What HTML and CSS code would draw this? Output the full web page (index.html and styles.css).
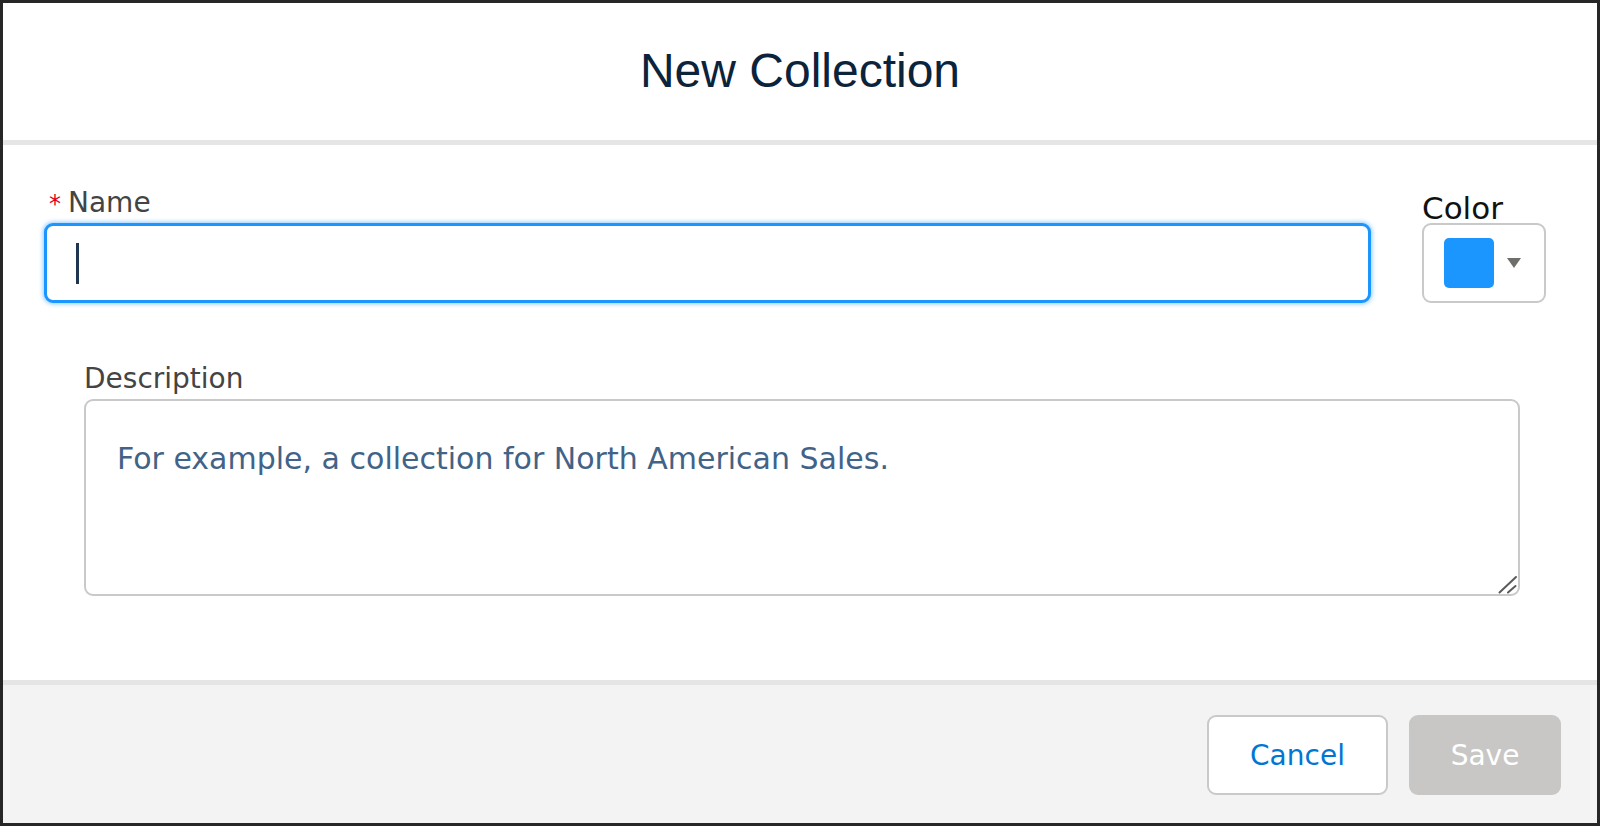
FILE: index.html
```html
<!DOCTYPE html>
<html lang="en">
<head>
<meta charset="utf-8">
<title>New Collection</title>
<link rel="stylesheet" href="styles.css">
</head>
<body>
<div class="modal">
  <header class="modal-header">
    <h1 class="title">New Collection</h1>
  </header>
  <main class="modal-body">
    <div class="row">
      <div class="field field-name">
        <label class="label"><abbr class="req" title="required">*</abbr>Name</label>
        <div class="input is-focused"><span class="caret"></span></div>
      </div>
      <div class="field field-color">
        <label class="label label-color">Color</label>
        <div class="color-btn"><span class="swatch"></span><span class="tri"></span></div>
      </div>
    </div>
    <div class="field field-desc">
      <label class="label label-desc">Description</label>
      <div class="textarea">
        <span class="placeholder">For example, a collection for North American Sales.</span>
        <svg class="grip" viewBox="0 0 20 20" width="20" height="20" aria-hidden="true">
          <path d="M1.5 18.5 L18 3" stroke="#5a5a5a" stroke-width="2" stroke-linecap="round" fill="none"/>
          <path d="M10 18.5 L17.5 12" stroke="#5a5a5a" stroke-width="2" stroke-linecap="round" fill="none"/>
        </svg>
      </div>
    </div>
  </main>
  <footer class="modal-footer">
    <button class="btn btn-neutral" type="button">Cancel</button>
    <button class="btn btn-disabled" type="button" disabled>Save</button>
  </footer>
</div>
</body>
</html>
```
FILE: styles.css
```css
* { box-sizing: border-box; }
html, body { margin: 0; padding: 0; }
body {
  font-family: "DejaVu Sans", "Liberation Sans", sans-serif;
  background: #fff;
}
.modal {
  width: 1600px;
  height: 826px;
  border: 3px solid #262626;
  display: flex;
  flex-direction: column;
  background: #fff;
  overflow: hidden;
}
.modal-header {
  flex: none;
  height: 142px;
  border-bottom: 5px solid #e5e5e5;
  display: flex;
  align-items: center;
  justify-content: center;
}
.title {
  margin: 0;
  padding-bottom: 2px;
  font: 400 48px/1 "Liberation Sans", Arial, sans-serif;
  color: #0b233b;
}
.modal-body {
  flex: 1;
  padding: 41px 51px 0 41px;
}
.row {
  display: flex;
  align-items: flex-end;
  gap: 51px;
}
.field-name { flex: 1; }
.label {
  display: block;
  font-size: 28px;
  line-height: 34px;
  color: #444;
  margin-bottom: 2px;
}
.req {
  color: #e3001b;
  text-decoration: none;
  font-size: 24px;
  margin-left: 5px;
  margin-right: 7px;
}
.label-color {
  font-size: 31px;
  line-height: 30px;
  color: #111;
  margin-bottom: 0;
}
.input {
  height: 80px;
  border: 3px solid #1b96ff;
  border-radius: 9px;
  box-shadow: 0 0 4px 1px rgba(27, 150, 255, 0.5);
  display: flex;
  align-items: center;
  padding-left: 29px;
  background: #fff;
}
.caret {
  width: 3px;
  height: 41px;
  background: #1f3550;
}
.field-color { flex: none; width: 124px; }
.color-btn {
  height: 80px;
  border: 2px solid #c9c9c9;
  border-radius: 9px;
  display: flex;
  align-items: center;
  padding-left: 20px;
  gap: 13px;
  background: #fff;
}
.swatch {
  width: 50px;
  height: 50px;
  border-radius: 5px;
  background: #1b96ff;
}
.tri {
  width: 0;
  height: 0;
  border-left: 7.5px solid transparent;
  border-right: 7.5px solid transparent;
  border-top: 10px solid #706e6b;
}
.field-desc { margin: 59px 26px 0 40px; }
.label-desc { margin-bottom: 3px; }
.textarea {
  position: relative;
  height: 197px;
  border: 2px solid #c9c9c9;
  border-radius: 9px;
  padding: 40px 31px 0;
  background: #fff;
}
.placeholder {
  font-size: 30px;
  line-height: 36px;
  color: #426387;
}
.grip {
  position: absolute;
  right: 0;
  bottom: 0;
}
.modal-footer {
  flex: none;
  height: 143px;
  border-top: 5px solid #e5e5e5;
  background: #f3f3f3;
  display: flex;
  justify-content: flex-end;
  align-items: center;
  gap: 21px;
  padding: 2px 36px 0 0;
}
.btn {
  height: 80px;
  border-radius: 9px;
  font: 28px "DejaVu Sans", "Liberation Sans", sans-serif;
  padding: 0;
  cursor: pointer;
}
.btn-neutral {
  width: 181px;
  background: #fff;
  border: 2px solid #c9c9c9;
  color: #0176d3;
}
.btn-disabled {
  width: 152px;
  background: #c9c7c5;
  border: 2px solid #c9c7c5;
  color: #fff;
  cursor: default;
}
```
